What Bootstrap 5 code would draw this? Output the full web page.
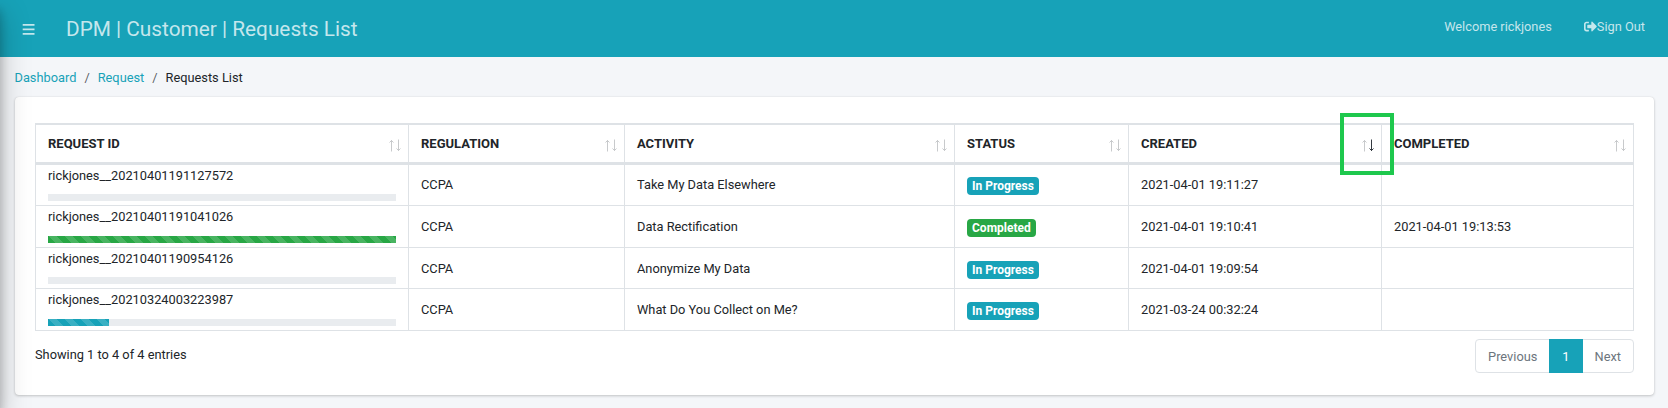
<!DOCTYPE html>
<html lang="en">
<head>
<meta charset="utf-8">
<title>DPM | Customer | Requests List</title>
<link href="https://cdn.jsdelivr.net/npm/bootstrap@5.3.0/dist/css/bootstrap.min.css" rel="stylesheet">
<style>
:root { --teal: #17a2b8; --line: #dee2e6; }
body { font-family: Roboto, "Liberation Sans", sans-serif; font-size: 12.8px; line-height: 19.5px; color: #212529; background: #f4f6f9; height: 408px; overflow: hidden; }
.offcanvas-edge { position: fixed; left: -250px; top: 0; width: 250px; height: 100vh; z-index: 10; box-shadow: 0 14px 28px rgba(0,0,0,.25), 0 10px 10px rgba(0,0,0,.22); }
.topbar { background: var(--teal); height: 57px; padding: 0 23px 4px 22px; color: rgba(255,255,255,.75); }
.topbar .title { font-size: 20.8px; line-height: 30px; margin-left: 31px; padding-top: 4px; }
.topbar svg { fill: currentColor; }
.topbar .burger { margin-top: 5px; }
.crumbs { height: 40px; padding: 11px 14.5px 0; font-size: 12.8px; --bs-breadcrumb-margin-bottom: 0; --bs-breadcrumb-item-padding-x: 8px; }
.crumbs a { color: var(--teal); text-decoration: none; }
.crumbs .active { color: #212529; }
.panel { margin: 0 14px 0 15px; height: 298px; border: 0; border-radius: 4px; padding: 26px 20px 0; box-shadow: 0 0 1px rgba(0,0,0,.13), 0 1px 3px rgba(0,0,0,.2); background: #fff; }
.requests { table-layout: fixed; width: 1599px; border-collapse: separate; border-spacing: 0; border-left: 1px solid var(--line); margin: 0; color: #212529; }
.requests th, .requests td { border: 0 solid var(--line); border-right-width: 1px; border-bottom-width: 1px; padding: 0 12px; vertical-align: middle; background: #fff; }
.requests th { height: 42px; border-top-width: 2px; border-bottom-width: 3px; font-size: 13px; font-weight: 700; padding-right: 7px; }
.requests td { height: 41px; }
.requests tr:nth-child(even) td { height: 42px; }
.requests tbody tr:nth-child(3) td:not(.idcell) { padding-top: 1px; }
.requests .idcell { vertical-align: bottom; padding-bottom: 4px; }
.requests .idcell span { display: block; line-height: 19px; margin-bottom: 9px; }
.requests tr:nth-child(even) .idcell span { margin-bottom: 10px; }
.requests .progress { height: 7px; border-radius: 0; background: #e9ecef; }
.requests .progress-bar { background-color: var(--teal); }
.requests .progress-bar.done { background-color: #28a745; }
.requests .badge { font-size: 12px; line-height: 12px; padding: 3px 5px; height: 18px; border-radius: 4px; background: var(--teal); font-weight: 700; vertical-align: middle; position: static; margin-top: 2px; }
.requests .badge.done { background: #28a745; }
.sorter { stroke: #c8cacc; fill: none; stroke-width: 1; margin-top: 3px; }
.sorter .on { stroke: #343a40; }
.marked { position: relative; }
.marker { position: absolute; right: -13px; top: -12px; width: 54px; height: 62px; border: 4px solid #1ec84d; z-index: 2; }
.pager { --bs-pagination-font-size: 12.8px; --bs-pagination-color: #6c757d; --bs-pagination-active-bg: #17a2b8; --bs-pagination-active-border-color: #17a2b8; --bs-pagination-border-radius: 4px; --bs-pagination-padding-x: 12px; --bs-pagination-border-color: #dee2e6; margin: 8px 0 0; }
.pager .page-link { height: 34px; line-height: 19.5px; padding-top: 7px; }
</style>
</head>
<body>
<aside class="offcanvas-edge"></aside>
<nav class="topbar d-flex align-items-center">
  <svg class="burger" width="13" height="14" viewBox="0 0 13 14"><path d="M.7 2.1h11.8v1.7H.7zM.7 6.600h11.8v1.7H.7zM.7 11h11.8v1.7H.7z"/></svg>
  <span class="title">DPM | Customer | Requests List</span>
  <span class="ms-auto">Welcome rickjones</span>
  <span class="d-flex align-items-center" style="margin-left:32px"><svg width="13" height="13" viewBox="0 0 512 512"><path d="M497 273L329 441c-15 15-41 4.500-41-17v-96H152c-13.300 0-24-10.700-24-24v-96c0-13.300 10.700-24 24-24h136V88c0-21.400 25.900-32 41-17l168 168c9.300 9.400 9.300 24.600 0 34zM192 436v-40c0-6.600-5.400-12-12-12H96c-17.700 0-32-14.300-32-32V160c0-17.700 14.300-32 32-32h84c6.600 0 12-5.400 12-12V76c0-6.600-5.400-12-12-12H96c-53 0-96 43-96 96v192c0 53 43 96 96 96h84c6.600 0 12-5.400 12-12z"/></svg>Sign Out</span>
</nav>
<ol class="breadcrumb crumbs">
  <li class="breadcrumb-item"><a href="#">Dashboard</a></li>
  <li class="breadcrumb-item"><a href="#">Request</a></li>
  <li class="breadcrumb-item active">Requests List</li>
</ol>
<main class="card panel">
  <table class="table requests">
    <colgroup><col style="width:373px"><col style="width:216px"><col style="width:330px"><col style="width:174px"><col style="width:253px"><col style="width:252px"></colgroup>
    <thead><tr>
      <th><div class="d-flex justify-content-between align-items-center">REQUEST ID<svg class="sorter" width="12" height="13"><path d="M2.500 12.500V1M.5 3.500l2-2 2 2"/><path d="M9.500.5V12M7.500 9.500l2 2 2-2"/></svg></div></th>
      <th><div class="d-flex justify-content-between align-items-center">REGULATION<svg class="sorter" width="12" height="13"><path d="M2.500 12.500V1M.5 3.500l2-2 2 2"/><path d="M9.500.5V12M7.500 9.500l2 2 2-2"/></svg></div></th>
      <th><div class="d-flex justify-content-between align-items-center">ACTIVITY<svg class="sorter" width="12" height="13"><path d="M2.500 12.500V1M.5 3.500l2-2 2 2"/><path d="M9.500.5V12M7.500 9.500l2 2 2-2"/></svg></div></th>
      <th><div class="d-flex justify-content-between align-items-center">STATUS<svg class="sorter" width="12" height="13"><path d="M2.500 12.500V1M.5 3.500l2-2 2 2"/><path d="M9.500.5V12M7.500 9.500l2 2 2-2"/></svg></div></th>
      <th class="marked"><div class="d-flex justify-content-between align-items-center">CREATED<svg class="sorter" width="12" height="13"><path d="M2.500 12.500V1M.5 3.500l2-2 2 2"/><path class="on" d="M9.500.5V12M7.500 9.500l2 2 2-2"/></svg></div><span class="marker"></span></th>
      <th><div class="d-flex justify-content-between align-items-center">COMPLETED<svg class="sorter" width="12" height="13"><path d="M2.500 12.500V1M.5 3.500l2-2 2 2"/><path d="M9.500.5V12M7.500 9.500l2 2 2-2"/></svg></div></th>
    </tr></thead>
    <tbody>
      <tr><td class="idcell"><span>rickjones__20210401191127572</span><div class="progress"></div></td><td>CCPA</td><td>Take My Data Elsewhere</td><td><span class="badge">In Progress</span></td><td>2021-04-01 19:11:27</td><td></td></tr>
      <tr><td class="idcell"><span>rickjones__20210401191041026</span><div class="progress"><div class="progress-bar progress-bar-striped done" style="width:100%"></div></div></td><td>CCPA</td><td>Data Rectification</td><td><span class="badge done">Completed</span></td><td>2021-04-01 19:10:41</td><td>2021-04-01 19:13:53</td></tr>
      <tr><td class="idcell"><span>rickjones__20210401190954126</span><div class="progress"></div></td><td>CCPA</td><td>Anonymize My Data</td><td><span class="badge">In Progress</span></td><td>2021-04-01 19:09:54</td><td></td></tr>
      <tr><td class="idcell"><span>rickjones__20210324003223987</span><div class="progress"><div class="progress-bar progress-bar-striped" style="width:17.5%"></div></div></td><td>CCPA</td><td>What Do You Collect on Me?</td><td><span class="badge">In Progress</span></td><td>2021-03-24 00:32:24</td><td></td></tr>
    </tbody>
  </table>
  <div class="d-flex justify-content-between">
    <div style="padding-top:14px">Showing 1 to 4 of 4 entries</div>
    <ul class="pagination pager">
      <li class="page-item"><a class="page-link" href="#">Previous</a></li>
      <li class="page-item active"><a class="page-link" href="#">1</a></li>
      <li class="page-item"><a class="page-link" href="#">Next</a></li>
    </ul>
  </div>
</main>
<script src="https://cdn.jsdelivr.net/npm/bootstrap@5.3.0/dist/js/bootstrap.bundle.min.js"></script>
</body>
</html>
